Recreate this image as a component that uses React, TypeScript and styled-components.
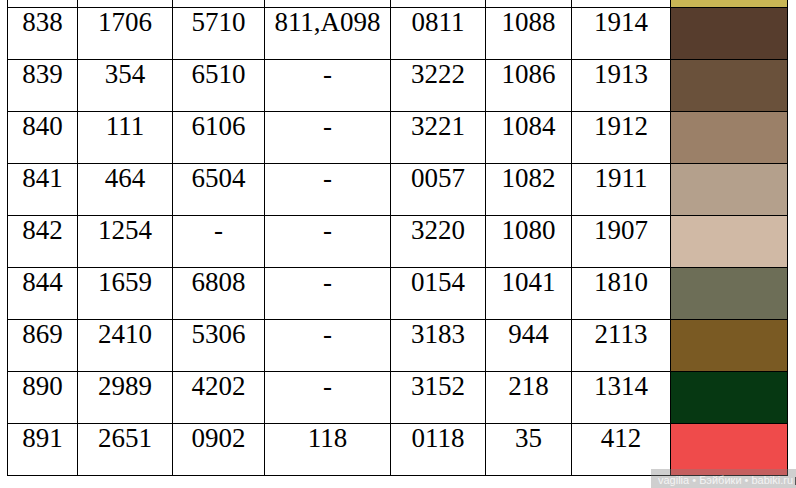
import React from "react";
import styled, { createGlobalStyle } from "styled-components";

const Global = createGlobalStyle`
  html, body { margin: 0; padding: 0; background: #ffffff; }
  body { width: 796px; height: 488px; overflow: hidden; }
`;

const Page = styled.div`
  position: relative;
  width: 796px;
  height: 488px;
  overflow: hidden;
  background: #ffffff;
  padding-left: 7px;
  box-sizing: border-box;
`;

const Grid = styled.div`
  display: grid;
  grid-template-columns: 70px 95px 92px 126px 95px 86px 99px 117px;
  grid-template-rows: 8px repeat(9, 52px);
  border-left: 1px solid #000;
  width: 780px;
`;

const Cell = styled.div`
  box-sizing: border-box;
  border-right: 1px solid #000;
  border-bottom: 1px solid #000;
  font-family: "Liberation Serif", "Times New Roman", serif;
  font-size: 27px;
  line-height: 28px;
  color: #000;
  text-align: center;
  overflow: hidden;
  white-space: nowrap;
`;

const Swatch = styled.div<{ $color: string }>`
  box-sizing: border-box;
  border-right: 1px solid #000;
  border-bottom: 1px solid #000;
  background: ${(p) => p.$color};
`;

const Watermark = styled.div`
  position: absolute;
  left: 651px;
  top: 469px;
  width: 145px;
  height: 19px;
  background: rgba(128, 128, 128, 0.38);
  display: flex;
  align-items: center;
  padding-left: 7px;
  box-sizing: border-box;
  gap: 2px;
`;

const WatermarkText = styled.span`
  font-family: "Liberation Sans", Arial, sans-serif;
  font-size: 11px;
  line-height: 12px;
  color: #f4f4f4;
  white-space: nowrap;
  margin-top: 2px;
`;

const WatermarkBox = styled.span`
  width: 6px;
  height: 6px;
  border: 1px solid #555;
  background: #e8e8e8;
  margin-top: 5px;
  flex: none;
`;

const rows: { v: string[]; c: string }[] = [
  { v: ["838", "1706", "5710", "811,A098", "0811", "1088", "1914"], c: "#573d2d" },
  { v: ["839", "354", "6510", "-", "3222", "1086", "1913"], c: "#6a513b" },
  { v: ["840", "111", "6106", "-", "3221", "1084", "1912"], c: "#9b8068" },
  { v: ["841", "464", "6504", "-", "0057", "1082", "1911"], c: "#b4a08c" },
  { v: ["842", "1254", "-", "-", "3220", "1080", "1907"], c: "#d0b9a5" },
  { v: ["844", "1659", "6808", "-", "0154", "1041", "1810"], c: "#6d6e57" },
  { v: ["869", "2410", "5306", "-", "3183", "944", "2113"], c: "#7a5a23" },
  { v: ["890", "2989", "4202", "-", "3152", "218", "1314"], c: "#063812" },
  { v: ["891", "2651", "0902", "118", "0118", "35", "412"], c: "#ef4b4b" },
];

export default function App() {
  return (
    <>
      <Global />
      <Page>
        <Grid>
          {Array.from({ length: 7 }).map((_, i) => (
            <Cell key={`top-${i}`} />
          ))}
          <Swatch $color="#c9b655" />
          {rows.map((r, ri) => (
            <React.Fragment key={ri}>
              {r.v.map((t, ci) => (
                <Cell key={ci}>{t}</Cell>
              ))}
              <Swatch $color={r.c} />
            </React.Fragment>
          ))}
        </Grid>
        <Watermark>
          <WatermarkText>vagilia • Бэйбики • babiki.ru</WatermarkText>
          <WatermarkBox />
        </Watermark>
      </Page>
    </>
  );
}
